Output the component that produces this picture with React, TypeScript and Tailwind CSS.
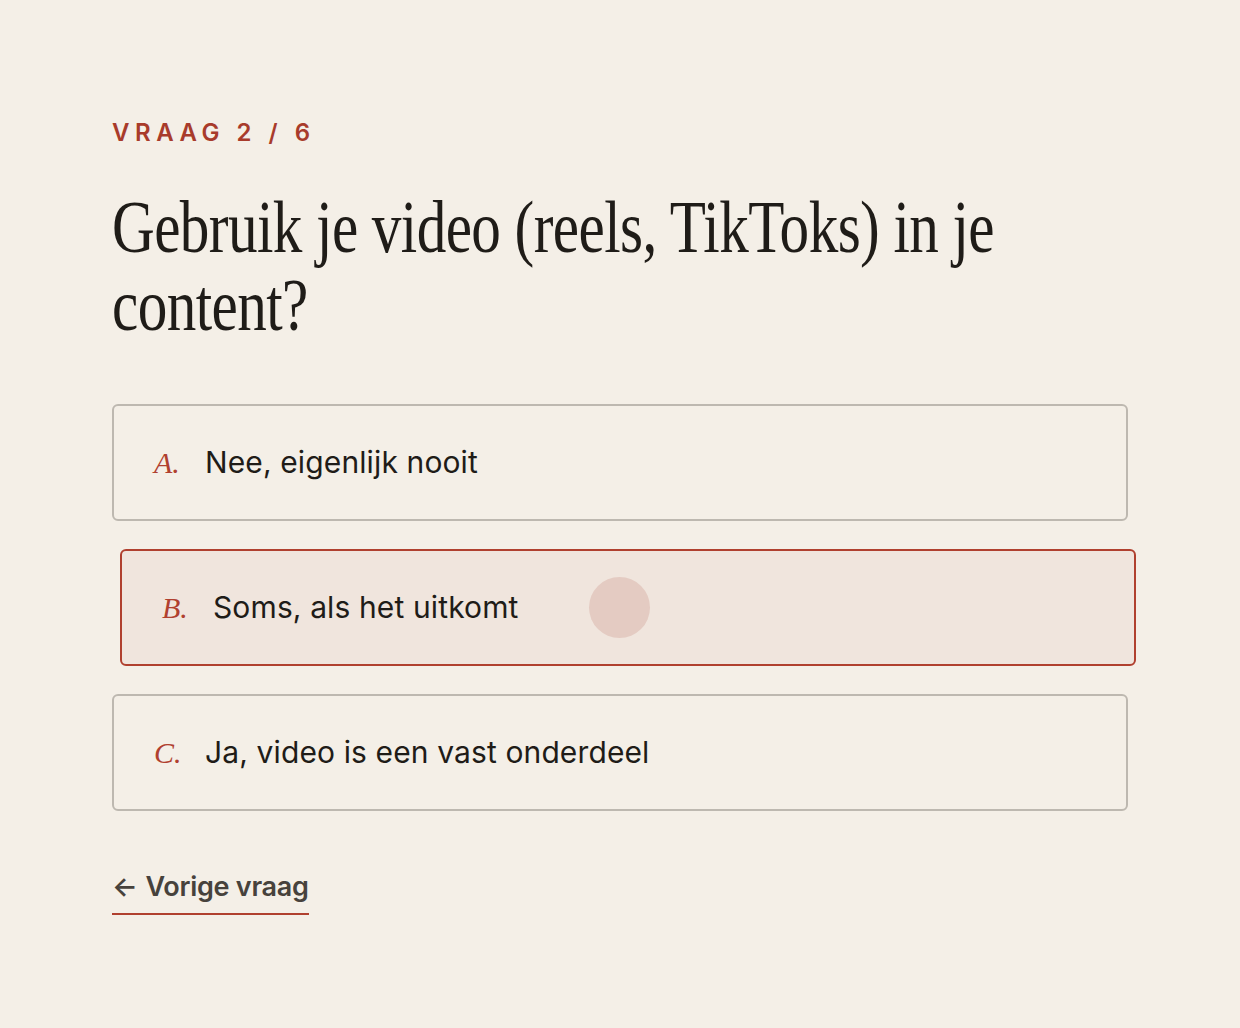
import { ReactNode } from "react";

const options = [
  { letter: "A.", text: "Nee, eigenlijk nooit", selected: false },
  { letter: "B.", text: "Soms, als het uitkomt", selected: true },
  { letter: "C.", text: "Ja, video is een vast onderdeel", selected: false },
];

export default function App() {
  return (
    <div className="min-h-[1028px] w-full bg-[#f4efe7] font-['Inter',sans-serif]">
      <div className="w-[1016px] ml-[112px] pt-[118px]">
        <p className="text-[#a83b2b] text-[24px] font-semibold tracking-[0.23em] leading-[30px]">
          VRAAG 2 / 6
        </p>
        <QuestionTitle>
          Gebruik je video (reels, TikToks) in je
          <br />
          content?
        </QuestionTitle>
        <div className="flex flex-col gap-[28px] mt-[60px]">
          {options.map((o) => (
            <OptionRow key={o.letter} letter={o.letter} selected={o.selected}>
              {o.text}
            </OptionRow>
          ))}
        </div>
        <button className="mt-[59px] flex items-center gap-[8px] pb-[9px] border-b-2 border-[#b0402f] text-[#47423c] text-[27px] font-semibold tracking-[-0.01em] leading-[34px]">
          <span className="text-[27px] font-semibold">←</span>
          <span>Vorige vraag</span>
        </button>
      </div>
    </div>
  );
}

function QuestionTitle({ children }: { children: ReactNode }) {
  return (
    <h1 className="mt-[40px] whitespace-nowrap origin-left scale-x-[0.8] font-['Liberation_Serif',serif] text-[74px] leading-[78px] text-[#1f1c18] tracking-[-0.01em]">
      {children}
    </h1>
  );
}

function OptionRow({
  letter,
  selected,
  children,
}: {
  letter: string;
  selected: boolean;
  children: ReactNode;
}) {
  return (
    <div
      className={
        selected
          ? "relative h-[117px] translate-x-[8px] flex items-center pl-[40px] rounded-[6px] border-2 border-[#b0402f] bg-[#f0e5dd] overflow-hidden"
          : "relative h-[117px] flex items-center pl-[40px] rounded-[6px] border-2 border-[#bdb8b0] bg-[#f4efe7]"
      }
    >
      <span className="w-[51px] font-['Liberation_Serif',serif] italic text-[30px] text-[#b0402f]">
        {letter}
      </span>
      <span className="text-[30px] text-[#1f1c18] tracking-[0.004em]">{children}</span>
      {selected ? (
        <span className="absolute left-[467px] top-[26px] w-[61px] h-[61px] rounded-full bg-[#e4cbc2]" />
      ) : null}
    </div>
  );
}
